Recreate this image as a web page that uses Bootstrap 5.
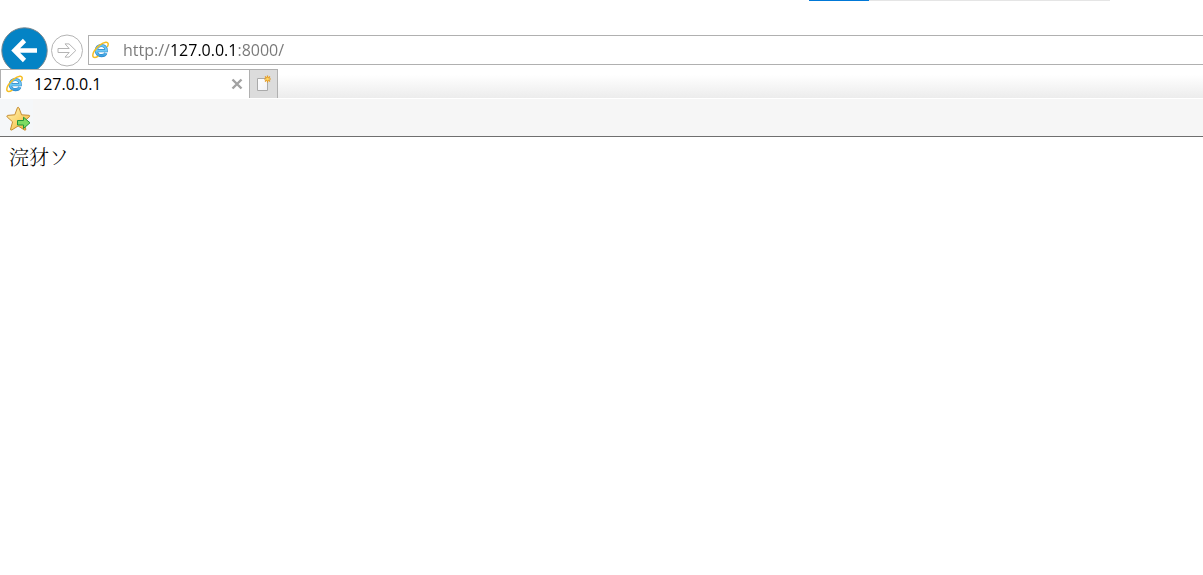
<!DOCTYPE html>
<html lang="zh">
<head>
<meta charset="utf-8">
<meta name="viewport" content="width=device-width, initial-scale=1">
<title>127.0.0.1</title>
<link href="https://cdn.jsdelivr.net/npm/bootstrap@5.3.0/dist/css/bootstrap.min.css" rel="stylesheet">
<style>
  body { font-family: "Open Sans", "Noto Sans CJK JP", sans-serif; font-size: 16px; line-height: 20px; color: #000; background: #fff; }
  svg { display: block; flex: none; }
  .window-top { height: 27px; padding-right: 93px; }
  .load-track { width: 301px; height: 1px; background: #e5e5e5; }
  .load-value { width: 20%; height: 1px; background: #0078d7; }
  .toolbar-row { height: 42px; overflow: hidden; padding-left: 1px; }
  .plain-btn { border: 0; padding: 0; background: none; }
  .forward { margin-left: 3px; }
  .address { height: 30px; margin: 8px 0 0 5px; border: 1px solid #b0b0b0; border-right: 0; padding-left: 3px; }
  .address input {
    border: 0; outline: 0; padding: 0; margin-left: 13px; height: 24px;
    color: transparent; caret-color: #000;
    background: linear-gradient(90deg, #777 47px, #000 47px 114px, #777 114px);
    -webkit-background-clip: text; background-clip: text;
  }
  .tab-row { height: 29px; background: linear-gradient(#fff 20%, #ececec); }
  .page-tab { width: 250px; border: 1px solid #b0b0b0; border-bottom: 0; background: #fff; padding: 0 6px 0 5px; }
  .page-tab a { color: #000; margin-left: 10px; }
  .new-tab { width: 28px; border: 1px solid #b0b0b0; border-width: 1px 1px 0 0; background: #dcdcdc; padding: 0 0 0 6px; }
  .favorites-row { height: 39px; border-top: 1px solid #fff; border-bottom: 1px solid #6f6f6f; background: #f6f6f6; }
  .favorites-row button { padding: 2px 2px 0 6px; background: #f5f7f9; }
  .document { padding: 10px 9px; font: 300 20px/20px "Noto Serif CJK JP", "Noto Sans CJK JP", serif; }
</style>
<script src="https://cdn.jsdelivr.net/npm/bootstrap@5.3.0/dist/js/bootstrap.bundle.min.js"></script>
</head>
<body>
<svg width="0" height="0" class="position-absolute" aria-hidden="true">
  <defs>
    <linearGradient id="blueGrad" gradientUnits="userSpaceOnUse" x1="0" y1="3" x2="0" y2="16"><stop offset="0" stop-color="#5fc0f0"/><stop offset=".55" stop-color="#6fcaf5"/><stop offset="1" stop-color="#2b93da"/></linearGradient>
    <linearGradient id="starGrad" x1="0" y1="0" x2="1" y2="1"><stop offset="0" stop-color="#fff3b8"/><stop offset=".5" stop-color="#fbd774"/><stop offset="1" stop-color="#efaa35"/></linearGradient>
    <linearGradient id="pageGrad" x1="0" y1="0" x2="1" y2="1"><stop offset="0" stop-color="#fff"/><stop offset="1" stop-color="#f0f0f4"/></linearGradient>
    <symbol id="browser" viewBox="0 0 18 18">
      <path d="M4.500 9.700H14.200C14.200 6.500 12.300 4.500 9.400 4.500 6.500 4.500 4.300 6.700 4.300 9.700c0 3 2.100 5 5.100 5 2.200 0 3.700-.9 4.500-2.600" fill="none" stroke="#2f86c8" stroke-width="3.200"/>
      <path d="M4.500 9.700H14.200C14.200 6.500 12.300 4.500 9.400 4.500 6.500 4.500 4.300 6.700 4.300 9.700c0 3 2.100 5 5.100 5 2.200 0 3.700-.9 4.500-2.600" fill="none" stroke="url(#blueGrad)" stroke-width="2.100"/>
      <path d="M15.500 5.500C16.900 2.800 16 .9 13.800 1.200 10.300 1.600 5 5.700 2.200 10.100.3 13.200.2 16.400 2.700 16.400c1 0 2.100-.4 3.200-1.100" fill="none" stroke="#f5bd22" stroke-width="1.500" stroke-linecap="round"/>
    </symbol>
  </defs>
</svg>

<header>
  <div class="window-top d-flex justify-content-end">
    <div class="load-track"><div class="load-value"></div></div>
  </div>

  <nav class="toolbar-row d-flex align-items-start" aria-label="Navigation">
    <button class="plain-btn" type="button" aria-label="Back">
      <svg width="47" height="47" viewBox="0 0 47 47"><circle cx="23.500" cy="23.500" r="22.700" fill="#0483c5" stroke="#75858e"/><path d="M36 23.500H14M23.500 13.500l-10 10 10 10" fill="none" stroke="#fff" stroke-width="4.600"/></svg>
    </button>
    <button class="plain-btn forward" type="button" aria-label="Forward">
      <svg width="32" height="47" viewBox="0 0 32 47"><circle cx="16" cy="23.500" r="15.500" fill="#fff" stroke="#b4b4b4"/><path d="M7 21.500h11.200l-4.200-4.600h4l6.800 6.600-6.800 6.600h-4l4.200-4.600H7Z" fill="#fff" stroke="#b4b4b4"/></svg>
    </button>
    <div class="address d-flex align-items-center flex-grow-1">
      <svg width="18" height="18"><use href="#browser"/></svg>
      <input class="flex-grow-1" type="text" value="http://127.0.0.1:8000/" aria-label="Address" spellcheck="false">
    </div>
  </nav>

  <div class="tab-row d-flex">
    <div class="page-tab d-flex align-items-center">
      <svg width="18" height="18"><use href="#browser"/></svg>
      <a class="flex-grow-1 text-decoration-none" href="#page">127.0.0.1</a>
      <button class="plain-btn" type="button" aria-label="Close tab">
        <svg width="12" height="12" viewBox="0 0 12 12"><path d="m1.500 1.500 9 9m0-9-9 9" stroke="#a2a2a2" stroke-width="2.400"/></svg>
      </button>
    </div>
    <button class="new-tab" type="button" aria-label="New tab">
      <svg width="17" height="18" viewBox="0 0 17 18"><path d="M1.500 3.500h10v12h-10z" fill="url(#pageGrad)" stroke="#aaa"/><path d="M11.500.5v7m-3.500-3.500h7m-6-2.500 5 5m0-5-5 5" stroke="#e59a20" stroke-width="1.200"/><circle cx="11.500" cy="4" r="1.500" fill="#ffd65e"/></svg>
    </button>
  </div>

  <div class="favorites-row d-flex">
    <button class="plain-btn" type="button" aria-label="Add to favorites">
      <svg width="25" height="26" viewBox="0 0 25 26"><path d="M11.500 1.500Q12.300.8 13 2l2.600 6.800 7.500.5q1.300.4.300 1.500l-5.600 4.800 2 7.600q0 1.400-1.300.8l-6.400-4-6.300 4q-1.400.5-1.200-1l2-7.200L1.200 11Q.3 9.700 1.600 9.400l7.200-.6Z" fill="url(#starGrad)" stroke="#c78d32" stroke-linejoin="round"/><path d="M11.500 14.500h6v-3.300l6.500 5.600-6.500 5.700v-3.500h-6Z" fill="#7ddb62" stroke="#23953a" stroke-linejoin="round"/></svg>
    </button>
  </div>
</header>
<main id="page" class="document">浣犲ソ</main>
</body>
</html>
